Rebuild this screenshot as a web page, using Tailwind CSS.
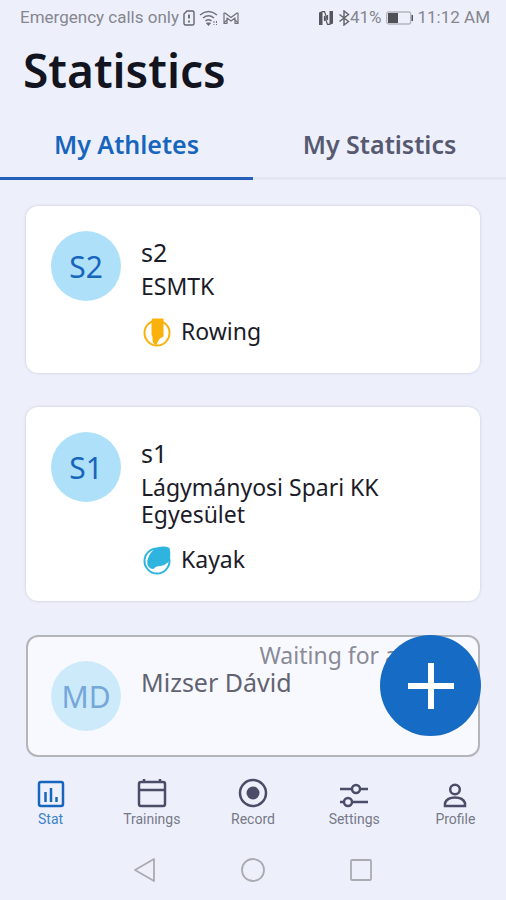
<!DOCTYPE html>
<html lang="en">
<head>
<meta charset="utf-8">
<meta name="viewport" content="width=device-width, initial-scale=1">
<title>Statistics</title>
<script src="https://cdn.jsdelivr.net/npm/@tailwindcss/browser@4"></script>
</head>
<body class="flex min-h-screen flex-col bg-[#edf0fb] font-['Noto_Sans',sans-serif] text-[#1b1b29]">
  <!-- Status bar -->
  <div class="flex h-9 items-center justify-between pr-4 pl-5 font-[Roboto,sans-serif] text-[17px] text-[#85868e]">
    <div class="flex items-center gap-1">
      <span>Emergency calls only</span>
      <svg class="h-4 w-3" viewBox="0 0 12 16" fill="none" stroke="#65666e" stroke-width="1.4"><path d="M4 1h5.500a1.500 1.500 0 0 1 1.500 1.500v11A1.500 1.500 0 0 1 9.500 15h-7A1.500 1.500 0 0 1 1 13.500V4z"/><path d="M6 4.500v4M6 10.500v2" stroke-width="1.800"/></svg>
      <svg class="h-4 w-5" viewBox="0 0 20 16" fill="none" stroke="#6f7078" stroke-width="1.500"><path d="M1 5q8.500-7 17 0M4 8q5.500-4.500 11 0M6.500 11q3-2.500 6 0"/><path d="m7.500 13 2 2.500 2-2.500z" fill="#6f7078" stroke-width="1"/><path d="M15 11v4M17.500 11v4" stroke-width="1" stroke-dasharray="2 1"/></svg>
      <svg class="h-4 w-4" viewBox="0 0 16 16" fill="none" stroke="#6f7078" stroke-width="1.200" stroke-linejoin="round"><path d="M1 3v10.500h3V8l4 3 4-3v5.500h3V3h-1L8 7.500 2 3zM1 13.500 5 8M15 13.500 11 8"/></svg>
    </div>
    <div class="flex items-center gap-1">
      <svg class="h-4 w-4" viewBox="0 0 16 16"><path d="M1 2.500 4.500 1v14H1zM11.500 1H15v12.500L11.500 15z" fill="#55565e"/><path d="M4 1.600h2.500L9.500 10V5M12 14.400H9.500L6.500 6v5" fill="none" stroke="#55565e" stroke-width="1.200"/></svg>
      <div class="flex items-center">
        <svg class="h-4 w-3" viewBox="0 0 12 16" fill="none" stroke="#65666e" stroke-width="1.500"><path d="m1.500 4.500 9 7-4.500 3.500V1l4.500 3.500-9 7"/></svg>
        <span>41%</span>
      </div>
      <svg class="h-3.5 w-7" viewBox="0 0 28 14"><rect x=".7" y="1" width="24" height="12" rx="2" fill="none" stroke="#b4b5bd" stroke-width="1.300"/><path d="M2 2h10v10H2z" fill="#505158"/><path d="M25.500 4H27v6h-1.500z" fill="#505158"/></svg>
      <span>11:12 AM</span>
    </div>
  </div>

  <h1 class="mt-2 px-[23px] text-[46px] leading-[52px] font-semibold text-[#12141f]">Statistics</h1>

  <!-- Tabs -->
  <div role="tablist" class="mt-3 grid h-[72px] grid-cols-2 text-[25px] font-semibold">
    <button role="tab" aria-selected="true" class="border-b-[3px] border-[#2360b8] pt-1 text-[#1765bd]">My Athletes</button>
    <button role="tab" aria-selected="false" class="border-b-[3px] border-[#e4e7f2] pt-1 text-[#565970]">My Statistics</button>
  </div>

  <main class="relative flex flex-1 flex-col gap-[34px] px-[26px] pt-[26px] pb-1">
    <article class="flex gap-5 rounded-xl bg-white p-[25px] shadow-[0_0_3px_#c4c7d3]">
      <div class="flex size-[70px] shrink-0 items-center justify-center rounded-full bg-[#aee1f9] text-[30px] text-[#1765bd]">S2</div>
      <div class="pt-[7px]">
        <h2 class="text-[25px] leading-7">s2</h2>
        <p class="mt-[7px] text-[23px] leading-[27px]">ESMTK</p>
        <p class="mt-[15px] mb-px flex items-center gap-2 text-[23px] leading-7">
          <svg class="size-8" viewBox="0 0 32 32"><circle cx="16" cy="18" r="12.500" fill="none" stroke="#fbb10c" stroke-width="2"/><path d="M11 3.500h11.500v18q-2.500 1-4 2.500-1.500 2-3 6-4-1-4-5V22l-1-2V6z" fill="#fbb10c"/></svg>
          Rowing
        </p>
      </div>
    </article>

    <article class="flex gap-5 rounded-xl bg-white p-[25px] shadow-[0_0_3px_#c4c7d3]">
      <div class="flex size-[70px] shrink-0 items-center justify-center rounded-full bg-[#aee1f9] text-[30px] text-[#1765bd]">S1</div>
      <div class="pt-[7px]">
        <h2 class="text-[25px] leading-7">s1</h2>
        <p class="mt-[7px] text-[23px] leading-[27px]">Lágymányosi Spari KK Egyesület</p>
        <p class="mt-[15px] mb-px flex items-center gap-2 text-[23px] leading-7">
          <svg class="size-8" viewBox="0 0 32 32"><circle cx="16" cy="18" r="12.500" fill="#fff" stroke="#2fb4df" stroke-width="2"/><path d="M28.500 5q2 8-1 14-3 3-8 4-5 0-7 3-4 0-6-4-1-4 1-8 3-7 9-9.500 7-2 12 .5z" fill="#2fb4df"/></svg>
          Kayak
        </p>
      </div>
    </article>

    <article class="relative flex gap-5 rounded-xl border-2 border-[#b4b5b9] bg-[#f8f9fe] px-[23px] py-6">
      <div class="flex size-[70px] shrink-0 items-center justify-center rounded-full bg-[#cdeafb] text-[30px] text-[#76a7da]">MD</div>
      <h2 class="pt-[7px] text-[25px] leading-7 text-[#626370]">Mizser Dávid</h2>
      <p class="absolute top-1 right-20 text-[23px] leading-7 text-[#898a97]">Waiting for a</p>
    </article>

    <button aria-label="Add athlete" class="absolute right-[25px] bottom-7 flex size-[101px] items-center justify-center rounded-full bg-[#166bc4]">
      <svg class="size-12" viewBox="0 0 48 48" stroke="#fff" stroke-width="6"><path d="M24 1v46M1 24h46"/></svg>
    </button>
  </main>

  <!-- Bottom navigation -->
  <nav class="grid h-[76px] grid-cols-5 pt-3 font-[Roboto,sans-serif] text-sm leading-[18px] text-[#777988]">
    <a href="#stat" class="flex flex-col items-center text-[#3d83cc]">
      <svg class="size-[34px]" viewBox="0 0 34 34" fill="none" stroke="#1765bd" stroke-width="2.500"><rect x="5" y="6" width="24" height="24" rx="2"/><path d="M11.500 16v10M17 12v14M22.500 21v5"/></svg>
      Stat
    </a>
    <a href="#trainings" class="flex flex-col items-center">
      <svg class="size-[34px]" viewBox="0 0 34 34" fill="none" stroke="#4b4d68" stroke-width="2.500"><rect x="4" y="6" width="26" height="24" rx="2"/><path d="M4 14h26M9 3v4M25 3v4"/></svg>
      Trainings
    </a>
    <a href="#record" class="flex flex-col items-center">
      <svg class="size-[34px]" viewBox="0 0 34 34"><circle cx="17" cy="17" r="13" fill="none" stroke="#4b4d68" stroke-width="2.500"/><circle cx="17" cy="17" r="6.500" fill="#4b4d68"/></svg>
      Record
    </a>
    <a href="#settings" class="flex flex-col items-center">
      <svg class="size-[34px]" viewBox="0 0 34 34" fill="none" stroke="#4b4d68" stroke-width="2.500"><path d="M3 13h11.500M23 13h8M3 26h3.500M15 26h16"/><circle cx="19" cy="13" r="4"/><circle cx="11" cy="26" r="4"/></svg>
      Settings
    </a>
    <a href="#profile" class="flex flex-col items-center">
      <svg class="size-[34px]" viewBox="0 0 34 34" fill="none" stroke="#4b4d68" stroke-width="2.500"><circle cx="17" cy="13.500" r="4.800"/><path d="M7 30v-3q2-5.500 10-5.500T27 27v3z"/></svg>
      Profile
    </a>
  </nav>

  <!-- System navigation -->
  <div class="flex h-[60px] items-center justify-center gap-20">
    <button aria-label="Back"><svg class="size-7" viewBox="0 0 28 28" fill="none" stroke="#aaabb1" stroke-width="1.800" stroke-linejoin="round"><path d="M23 3v22L4 14z"/></svg></button>
    <button aria-label="Home"><svg class="size-7" viewBox="0 0 28 28" fill="none" stroke="#aaabb1" stroke-width="1.800"><circle cx="14" cy="14" r="11"/></svg></button>
    <button aria-label="Recent apps"><svg class="size-7" viewBox="0 0 28 28" fill="none" stroke="#aaabb1" stroke-width="1.800"><rect x="4" y="4" width="20" height="20" rx="1"/></svg></button>
  </div>
</body>
</html>
